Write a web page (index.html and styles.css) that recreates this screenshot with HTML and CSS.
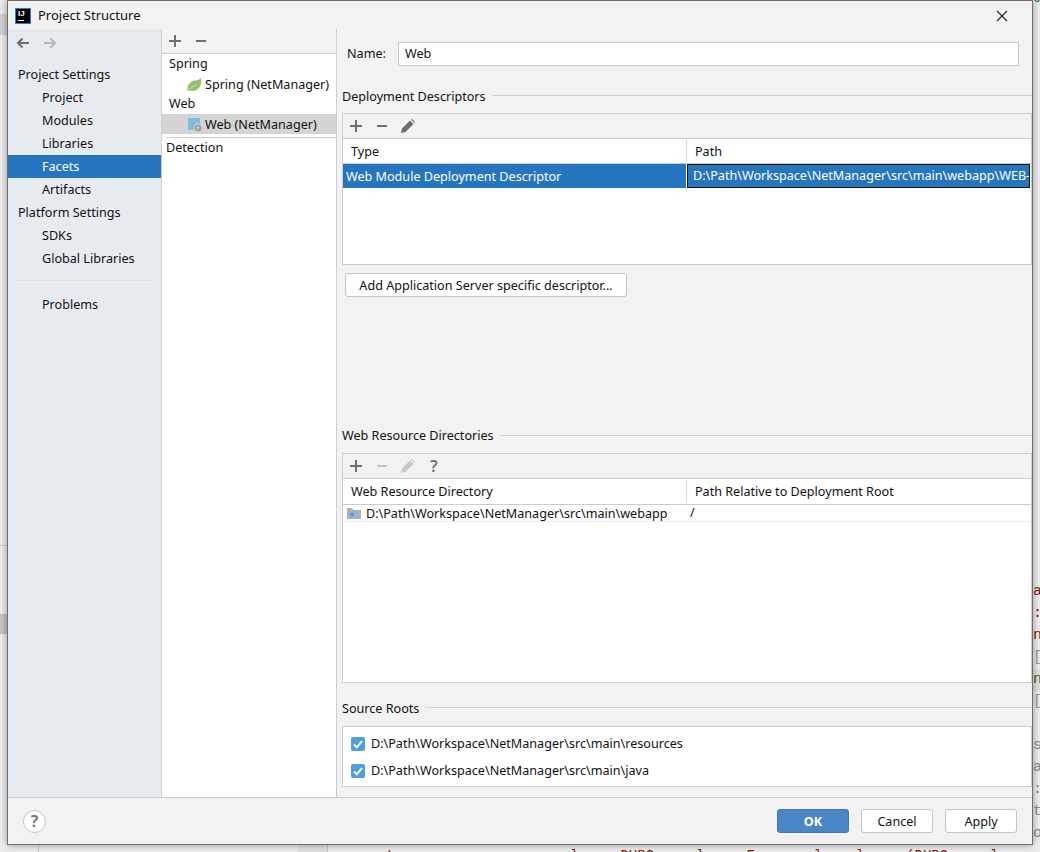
FILE: index.html
```html
<!DOCTYPE html>
<html lang="en">
<head>
<meta charset="utf-8">
<title>Project Structure</title>
<link rel="stylesheet" href="styles.css">
</head>
<body>
<div class="backdrop">
  <div class="bg-block bg-left-top"></div>
  <div class="bg-block bg-left-mid"></div>
  <div class="bg-rule bg-left-rule"></div>
  <div class="bg-block bg-bottom-block"></div>
  <div class="bg-vline bg-vline-a"></div>
  <div class="bg-vline bg-vline-b"></div>
  <div class="bg-top-code">Je</div>
  <div class="bg-code">
    <div class="code-line red">a</div>
    <div class="code-line red">: -</div>
    <div class="code-line red">nt</div>
    <div class="code-line link">[r</div>
    <div class="code-line hl">na</div>
    <div class="code-line link">[r</div>
    <div class="code-line"></div>
    <div class="code-line grey">s(</div>
    <div class="code-line grey">a:</div>
    <div class="code-line grey">:7</div>
    <div class="code-line grey">ti</div>
    <div class="code-line grey">or</div>
  </div>
  <div class="bg-bottom-code">.. ! ....... . ....... . l ... DUBO ... l ... F ..... l .. l ... (DUBO ... l ... F..... l .. 220)</div>
</div>

<div class="dialog">
  <header class="titlebar">
    <span class="logo"><span class="logo-text">IJ</span><span class="logo-bar"></span></span>
    <span class="title">Project Structure</span>
    <svg class="close" width="12" height="12" viewBox="0 0 12 12"><path d="M1 1l10 10M11 1L1 11" stroke="#222" stroke-width="1.1" fill="none"/></svg>
  </header>

  <main class="main">
    <nav class="sidebar">
      <div class="history">
        <svg width="16" height="16" viewBox="0 0 16 16"><path d="M14 8H3M7.500 3.500L3 8l4.500 4.500" stroke="#6e6e6e" stroke-width="2" fill="none"/></svg>
        <svg width="16" height="16" viewBox="0 0 16 16"><path d="M2 8h11M8.500 3.500L13 8l-4.500 4.500" stroke="#b8b8b8" stroke-width="2" fill="none"/></svg>
      </div>
      <div class="nav-head">Project Settings</div>
      <div class="nav-item">Project</div>
      <div class="nav-item">Modules</div>
      <div class="nav-item">Libraries</div>
      <div class="nav-item active">Facets</div>
      <div class="nav-item">Artifacts</div>
      <div class="nav-head">Platform Settings</div>
      <div class="nav-item">SDKs</div>
      <div class="nav-item">Global Libraries</div>
      <div class="nav-sep"></div>
      <div class="nav-item">Problems</div>
    </nav>

    <section class="facets">
      <div class="toolbar facets-bar">
        <span class="tool"><svg width="12" height="12" viewBox="0 0 12 12"><path d="M6 0v12M0 6h12" stroke="#6e6e6e" stroke-width="2"/></svg></span>
        <span class="tool"><svg width="12" height="12" viewBox="0 0 12 12"><path d="M1 6h10" stroke="#6e6e6e" stroke-width="2"/></svg></span>
      </div>
      <div class="tree-group">Spring</div>
      <div class="tree-item">
        <svg class="tree-icon" width="16" height="16" viewBox="0 0 16 16"><path d="M.5 14.500C0 9 3 5 8 4.500 10.500 4.300 12.500 3.500 14 2c1 5-.5 11-6 12.500-3 .8-6 .5-7.500 0z" fill="#8fc36f"/><path d="M2 14c2-3 4.500-4.500 7.500-5.500" stroke="#d8ecc9" stroke-width=".8" fill="none"/></svg>
        <span>Spring (NetManager)</span>
      </div>
      <div class="tree-group">Web</div>
      <div class="tree-item selected">
        <svg class="tree-icon" width="16" height="16" viewBox="0 0 16 16"><path d="M1 2h12v12H1z" fill="#7cbce0"/><circle cx="11" cy="12" r="4.500" fill="#d4d4d4"/><circle cx="11" cy="12" r="3.500" fill="#9aa0a5"/><path d="M9.500 10.500h2l1 1-1.500 1 .5 1.500-1.500-1.500z" fill="#d4d4d4"/></svg>
        <span>Web (NetManager)</span>
      </div>
      <div class="detection">Detection</div>
    </section>

    <section class="detail">
      <div class="name-row">
        <label class="name-label" for="facet-name">Name:</label>
        <input class="name-input" id="facet-name" value="Web">
      </div>

      <div class="group-title first"><span>Deployment Descriptors</span><i></i></div>
      <div class="table table-desc">
        <div class="toolbar">
          <span class="tool"><svg width="12" height="12" viewBox="0 0 12 12"><path d="M6 0v12M0 6h12" stroke="#6e6e6e" stroke-width="2"/></svg></span>
          <span class="tool"><svg width="12" height="12" viewBox="0 0 12 12"><path d="M1 6h10" stroke="#6e6e6e" stroke-width="2"/></svg></span>
          <span class="tool"><svg width="14" height="14" viewBox="0 0 14 14"><path d="M0 14l1-4.500L9 1.500 12.500 5l-8 8zM10 .5l1-.5 3 3-.5 1z" fill="#6e6e6e"/></svg></span>
        </div>
        <div class="thead">
          <div class="th col-a">Type</div>
          <div class="th col-b">Path</div>
        </div>
        <div class="desc-row">
          <div class="desc-type">Web Module Deployment Descriptor</div>
          <div class="desc-path">D:\Path\Workspace\NetManager\src\main\webapp\WEB-INF\web.xml</div>
        </div>
      </div>
      <button class="btn add-btn">Add Application Server specific descriptor...</button>

      <div class="group-title second"><span>Web Resource Directories</span><i></i></div>
      <div class="table table-res">
        <div class="toolbar">
          <span class="tool"><svg width="12" height="12" viewBox="0 0 12 12"><path d="M6 0v12M0 6h12" stroke="#6e6e6e" stroke-width="2"/></svg></span>
          <span class="tool"><svg width="12" height="12" viewBox="0 0 12 12"><path d="M1 6h10" stroke="#c4c4c4" stroke-width="2"/></svg></span>
          <span class="tool"><svg width="14" height="14" viewBox="0 0 14 14"><path d="M0 14l1-4.500L9 1.500 12.500 5l-8 8zM10 .5l1-.5 3 3-.5 1z" fill="#c8c8c8"/></svg></span>
          <span class="tool tool-q">?</span>
        </div>
        <div class="thead thead-tall">
          <div class="th col-a">Web Resource Directory</div>
          <div class="th col-b">Path Relative to Deployment Root</div>
        </div>
        <div class="res-row">
          <div class="res-dir">
            <svg width="14" height="12" viewBox="0 0 14 12"><path d="M0 1h5l1.500 2H14v9H0z" fill="#a3b2bd"/><circle cx="5" cy="7.500" r="2" fill="#39a7ec"/></svg>
            <span>D:\Path\Workspace\NetManager\src\main\webapp</span>
          </div>
          <div class="res-path">/</div>
        </div>
      </div>

      <div class="group-title third"><span>Source Roots</span><i></i></div>
      <div class="roots">
        <label class="root"><span class="check"><svg width="14" height="14" viewBox="0 0 14 14"><path d="M3 7.500l2.800 2.800L11 4.200" stroke="#fff" stroke-width="2" fill="none"/></svg></span>D:\Path\Workspace\NetManager\src\main\resources</label>
        <label class="root"><span class="check"><svg width="14" height="14" viewBox="0 0 14 14"><path d="M3 7.500l2.800 2.800L11 4.200" stroke="#fff" stroke-width="2" fill="none"/></svg></span>D:\Path\Workspace\NetManager\src\main\java</label>
      </div>
    </section>
  </main>

  <footer class="footer">
    <span class="help">?</span>
    <div class="actions">
      <button class="btn primary">OK</button>
      <button class="btn action">Cancel</button>
      <button class="btn action">Apply</button>
    </div>
  </footer>
</div>
</body>
</html>
```

FILE: styles.css
```css
* { box-sizing: border-box; }
html, body { margin: 0; padding: 0; }
body {
  position: relative;
  width: 1040px;
  height: 852px;
  overflow: hidden;
  background: #f4f4f4;
  font: 12.6px/18px "Noto Sans", "Liberation Sans", sans-serif;
  color: #111;
}

/* IDE visible behind the dialog */
.backdrop { position: absolute; inset: 0; overflow: hidden; background: #efefef; }
.bg-block { position: absolute; background: #d4d4d4; }
.bg-left-top { left: 0; top: 14px; width: 8px; height: 21px; }
.bg-left-mid { left: 0; top: 614px; width: 8px; height: 20px; background: #c4c4c4; }
.bg-rule { position: absolute; height: 1px; background: #cfcfcf; }
.bg-left-rule { left: 0; top: 545px; width: 8px; }
.bg-bottom-block { left: 298px; top: 845px; width: 29px; height: 7px; background: #e4e4e4; }
.bg-vline { position: absolute; top: 845px; width: 1px; height: 7px; background: #c8c8c8; }
.bg-vline-a { left: 38px; }
.bg-vline-b { left: 327px; }
.bg-top-code { position: absolute; left: 1033px; top: -10px; font: 14px/16px "Liberation Mono", monospace; color: #2f7d32; }
.bg-code { position: absolute; left: 1033px; top: 581px; width: 7px; overflow: hidden; }
.code-line { height: 22px; font: 15px/22px "Liberation Mono", monospace; white-space: nowrap; }
.red { color: #7a1c1c; }
.link { color: #8a9aa8; }
.grey { color: #8a8a8a; }
.hl { background: #dfe8d6; color: #555; }
.bg-bottom-code { position: absolute; left: 360px; top: 845px; width: 672px; height: 7px; overflow: hidden; font: 14px/22px "Liberation Mono", monospace; color: #7a1c1c; white-space: pre; }

/* dialog window */
.dialog {
  position: absolute;
  left: 7px;
  top: 0;
  width: 1026px;
  height: 845px;
  display: flex;
  flex-direction: column;
  background: #f2f2f2;
  border: 1px solid #6f6f6f;
  box-shadow: 0 0 8px rgba(0, 0, 0, .4);
}
.titlebar { height: 28px; display: flex; align-items: center; padding: 0 24px 0 7px; flex: none; }
.logo { position: relative; width: 16px; height: 16px; margin-top: 1px; background: #000; border: 1px solid #2f7fd0; flex: none; }
.logo-text { position: absolute; left: 2px; top: 0; font: 700 8px/9px "Liberation Sans", sans-serif; color: #fff; }
.logo-bar { position: absolute; left: 2px; bottom: 2px; width: 6px; height: 1px; background: #fff; }
.title { margin-left: 7px; font-size: 13px; }
.close { margin-left: auto; margin-top: 1px; }

.main { height: 768px; display: flex; flex: none; }
.sidebar { width: 154px; flex: none; background: #e6ebf0; border-right: 1px solid #cdd1d4; }
.history { height: 34px; display: flex; align-items: center; gap: 11px; padding: 0 0 6px 7px; }
.nav-head { height: 23px; line-height: 24px; padding-left: 10px; }
.nav-item { height: 23px; line-height: 24px; padding-left: 34px; }
.nav-item.active { background: #2675bf; color: #fff; }
.nav-sep { height: 1px; margin: 10px 8px 12px 8px; background: #dcdfe2; }

.facets { width: 175px; flex: none; background: #fff; border-right: 1px solid #cdcdcd; }
.toolbar { height: 25px; display: flex; align-items: center; background: #f2f2f2; border-bottom: 1px solid #cdcdcd; }
.facets-bar { height: 25px; }
.tool { width: 26px; height: 24px; display: flex; align-items: center; justify-content: center; }
.tool-q { font-size: 16px; font-weight: 600; color: #6e6e6e; }
.tree-group { height: 20px; line-height: 19px; padding-left: 7px; }
.tree-item { height: 20px; line-height: 19px; display: flex; align-items: center; padding-left: 25px; white-space: nowrap; }
.tree-item.selected { background: #d4d4d4; }
.tree-icon { flex: none; margin-right: 2px; }
.detection { margin: 3px 0 0 4px; border-top: 1px solid #cdcdcd; height: 21px; line-height: 20px; }

.detail { flex: 1; min-width: 0; overflow: hidden; }
.name-row { display: flex; align-items: center; padding: 13px 0 0 10px; }
.name-label { width: 51px; flex: none; padding-bottom: 1px; }
.name-input {
  width: 621px;
  height: 24px;
  padding: 0 6px 1px;
  border: 1px solid #c9c9c9;
  background: #fff;
  font: inherit;
  color: inherit;
  outline: none;
}
.group-title { height: 20px; line-height: 18px; display: flex; align-items: center; margin-left: 5px; white-space: nowrap; }
.group-title span { padding-top: 1px; }
.group-title i { flex: 1; height: 1px; background: #d1d1d1; margin: 0 0 2px 6px; }
.group-title.first { margin-top: 20px; }
.group-title.second { margin-top: 128px; }
.group-title.second i { margin-bottom: 0; }
.group-title.third { margin-top: 15px; }

.table { margin: 7px 0 0 5px; border: 1px solid #cdcdcd; background: #fff; }
.table-desc { height: 152px; }
.table-res { height: 230px; margin-top: 8px; }
.thead { height: 25px; display: flex; border-bottom: 1px solid #cdcdcd; }
.thead-tall { height: 26px; }
.th { padding-left: 8px; }
.col-a { width: 344px; flex: none; border-right: 1px solid #d8d8d8; margin: 1px 0; line-height: 24px; }
.col-b { flex: 1; margin: 1px 0; line-height: 24px; padding-left: 8px; }
.desc-row { height: 24px; display: flex; background: #fff; }
.desc-type { width: 343px; flex: none; background: #2675bf; color: #fff; padding-left: 3px; line-height: 26px; }
.desc-path {
  width: 343px;
  margin-left: 1px;
  flex: none;
  padding-left: 5px;
  border: 1px solid #111;
  background: #2675bf;
  color: #fff;
  line-height: 22px;
  white-space: nowrap;
  overflow: hidden;
}
.res-row { height: 17px; display: flex; border-bottom: 1px solid #ececec; line-height: 15px; }
.res-dir { width: 344px; flex: none; display: flex; align-items: center; padding-left: 4px; gap: 5px; }
.res-path { padding-left: 3px; }

.btn {
  height: 24px;
  padding: 2px 0 0;
  border: 1px solid #c4c4c4;
  border-radius: 3px;
  background: #fff;
  font: inherit;
  line-height: 18px;
  color: inherit;
}
.add-btn { display: block; width: 282px; margin: 8px 0 0 8px; }

.roots { height: 61px; margin: 8px 0 0 5px; padding-top: 3px; border: 1px solid #cdcdcd; background: #fff; }
.root { height: 27px; line-height: 26px; display: flex; align-items: center; padding-left: 8px; }
.check { width: 14px; height: 14px; margin-right: 6px; border-radius: 2px; background: #4f9ee3; flex: none; display: flex; }

.footer { flex: 1; display: flex; align-items: center; padding: 0 15px 0 15px; border-top: 1px solid #cdcdcd; }
.help {
  width: 23px;
  height: 23px;
  border: 1px solid #c4c4c4;
  border-radius: 50%;
  background: #fff;
  display: flex;
  align-items: center;
  justify-content: center;
  font-size: 16px;
  font-weight: 600;
  color: #6e6e6e;
}
.actions { margin-left: auto; display: flex; }
.action { width: 72px; margin-left: 12px; }
.primary { width: 72px; background: #4a86c7; border-color: #3f7ab8; color: #fff; font-weight: 700; }
```
